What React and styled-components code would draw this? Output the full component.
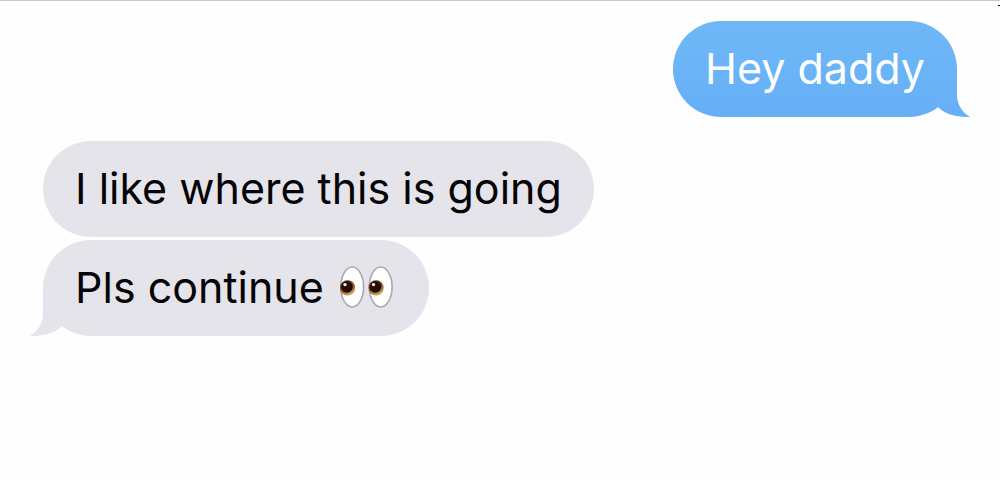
import styled, { createGlobalStyle } from "styled-components";

const GlobalStyle = createGlobalStyle`
  body {
    margin: 0;
    background-color: #fefefe;
    font-family: Inter, "Liberation Sans", sans-serif;
  }
`;

const Screen = styled.main`
  position: relative;
  border-top: 1px solid #c8c7cb;
`;

const Mark = styled.svg`
  position: absolute;
  top: 4px;
  right: 0;
`;

const MessageList = styled.ol`
  display: flex;
  flex-direction: column;
  margin: 0;
  padding: 20px 43px;
  list-style: none;
`;

const Message = styled.li`
  position: relative;
  box-sizing: border-box;
  align-self: ${({ $sent }) => ($sent ? "flex-end" : "flex-start")};
  margin-bottom: ${({ $sent }) => ($sent ? "24px" : "3px")};
  padding: 19px 32px 21px;
  border-radius: 48px;
  background: ${({ $sent }) =>
    $sent ? "linear-gradient(#6fb8f7, #66aff6)" : "#e5e4eb"};
  color: ${({ $sent }) => ($sent ? "#fbffff" : "#050507")};
  font-size: 43px;
  line-height: 56px;
`;

const TailShape = styled.svg`
  position: absolute;
  bottom: 0;
  ${({ $sent }) => ($sent ? "right: -14px;" : "left: -14px;")}
  transform: ${({ $sent }) => ($sent ? "none" : "scaleX(-1)")};
`;

const EyesIcon = styled.svg`
  margin: 0 3px 0 4px;
  vertical-align: -5px;
`;

function Tail({ sent }) {
  return (
    <TailShape $sent={sent} width="62" height="48" viewBox="0 0 62 48" aria-hidden="true">
      <defs>
        <linearGradient id="sentTail" x1="0" y1="0" x2="0" y2="1">
          <stop offset="0" stopColor="#6bb4f7" />
          <stop offset="1" stopColor="#66aff6" />
        </linearGradient>
      </defs>
      <path
        d="M48 0V26C48 36 54 44 61 48C48 48 37 46 29 38L24 24Z"
        fill={sent ? "url(#sentTail)" : "#e5e4eb"}
      />
    </TailShape>
  );
}

function Eye({ x }) {
  return (
    <g transform={`translate(${x} 0)`}>
      <ellipse cx="12.2" cy="21" rx="11.4" ry="20" fill="#fefefe" stroke="#aaa9ad" strokeWidth="1.6" />
      <circle cx="7.6" cy="21.8" r="7.6" fill="url(#iris)" />
      <circle cx="7" cy="21" r="5.8" fill="#260c05" />
      <circle cx="5" cy="18.6" r="1.7" fill="#f4efec" />
    </g>
  );
}

function Eyes() {
  return (
    <EyesIcon width="54" height="42" viewBox="0 0 54 42" role="img" aria-label="eyes">
      <defs>
        <linearGradient id="iris" x1="0" y1="0" x2="0.5" y2="1">
          <stop offset="0" stopColor="#3c1c0c" />
          <stop offset="0.55" stopColor="#7a4f20" />
          <stop offset="1" stopColor="#c9a25c" />
        </linearGradient>
      </defs>
      <Eye x={0} />
      <Eye x={28.5} />
    </EyesIcon>
  );
}

export default function App() {
  return (
    <>
      <GlobalStyle />
      <Screen>
        <Mark width="2" height="1" aria-hidden="true">
          <rect width="2" height="1" fill="#000" />
        </Mark>
        <MessageList>
          <Message $sent>
            Hey daddy
            <Tail sent />
          </Message>
          <Message>I like where this is going</Message>
          <Message>
            Pls continue <Eyes />
            <Tail />
          </Message>
        </MessageList>
      </Screen>
    </>
  );
}
